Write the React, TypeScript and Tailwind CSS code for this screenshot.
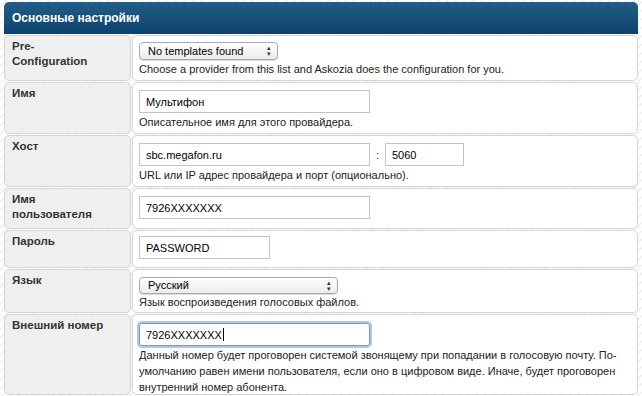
import type { ReactNode } from 'react';

const font = { fontFamily: '"Liberation Sans", Arial, sans-serif' };

function Row({ label, children, h }: { label: ReactNode; children: ReactNode; h: string }) {
  return (
    <div className={`flex gap-px ${h}`}>
      <div className="w-[127px] shrink-0 rounded-[5px] border border-[#d4d4d4] bg-[#efefef] px-[7px] pt-[3px] text-[11.5px] font-bold leading-[15px] text-[#333]">
        {label}
      </div>
      <div className="flex-1 rounded-[5px] border border-[#d4d4d4] bg-white px-[6px] pt-[6px] text-[11px] leading-[16px] text-[#222]">
        {children}
      </div>
    </div>
  );
}

function Input({ value, w, focus }: { value: string; w: string; focus?: boolean }) {
  return (
    <div
      className={`flex h-[23px] items-center border px-[6px] text-[11px] text-black ${w} ${
        focus ? 'rounded-[3px] border-[#6e9ad0] shadow-[0_0_0_2px_#a9c8ec]' : 'border-[#c4c4c4] bg-white'
      }`}
    >
      {value}
      {focus && <span className="ml-px h-[13px] w-px bg-black" />}
    </div>
  );
}

function Select({ value, w, h }: { value: string; w: string; h: string }) {
  return (
    <div
      className={`flex items-center justify-between rounded-[4px] border border-[#a9a9a9] bg-gradient-to-b from-white to-[#ececec] pl-[8px] pr-[6px] text-[11px] leading-none text-black shadow-[0_1px_0_#ddd] ${w} ${h}`}
    >
      <span>{value}</span>
      <span className="flex flex-col items-center text-[7px] leading-[6px] text-[#333]">
        <span>▴</span>
        <span>▾</span>
      </span>
    </div>
  );
}

export default function App() {
  return (
    <div
      style={font}
      className="h-[396px] w-[642px] overflow-hidden bg-[repeating-linear-gradient(135deg,#ffffff_0px,#ffffff_4px,#e8e8e8_5px,#ffffff_6px)] px-[4px] pt-[2px]"
    >
      <div className="mb-px flex h-[32px] items-center rounded-t-[5px] bg-gradient-to-b from-[#235d88] to-[#0b426d] px-[8px] text-[12px] font-bold text-white">
        Основные настройки
      </div>
      <div className="flex flex-col gap-px">
        <Row label={<>Pre-<br />Configuration</>} h="h-[46px]">
          <Select value="No templates found" w="w-[139px]" h="h-[18px]" />
          <div className="mt-[1px]">Choose a provider from this list and Askozia does the configuration for you.</div>
        </Row>
        <Row label="Имя" h="h-[52px]">
          <div className="pt-px">
            <Input value="Мультифон" w="w-[231px]" />
          </div>
          <div className="mt-[1px]">Описательное имя для этого провайдера.</div>
        </Row>
        <Row label="Хост" h="h-[52px]">
          <div className="flex items-center pt-px">
            <Input value="sbc.megafon.ru" w="w-[231px]" />
            <span className="w-[15px] text-center">:</span>
            <Input value="5060" w="w-[79px]" />
          </div>
          <div className="mt-[1px]">URL или IP адрес провайдера и порт (опционально).</div>
        </Row>
        <Row label={<>Имя<br />пользователя</>} h="h-[41px]">
          <div className="pt-px">
            <Input value="7926XXXXXXX" w="w-[231px]" />
          </div>
        </Row>
        <Row label="Пароль" h="h-[38px]">
          <div className="-mt-px">
            <Input value="PASSWORD" w="w-[131px]" />
          </div>
        </Row>
        <Row label="Язык" h="h-[44px]">
          <div className="pt-px">
            <Select value="Русский" w="w-[199px]" h="h-[17px]" />
          </div>
          <div>Язык воспроизведения голосовых файлов.</div>
        </Row>
        <Row label="Внешний номер" h="h-[81px]">
          <div className="pt-[2px]">
            <Input value="7926XXXXXXX" w="w-[231px]" focus />
          </div>
          <div className="mt-[1px]">
            Данный номер будет проговорен системой звонящему при попадании в голосовую почту. По-
            <br />
            умолчанию равен имени пользователя, если оно в цифровом виде. Иначе, будет проговорен
            <br />
            внутренний номер абонента.
          </div>
        </Row>
      </div>
    </div>
  );
}
